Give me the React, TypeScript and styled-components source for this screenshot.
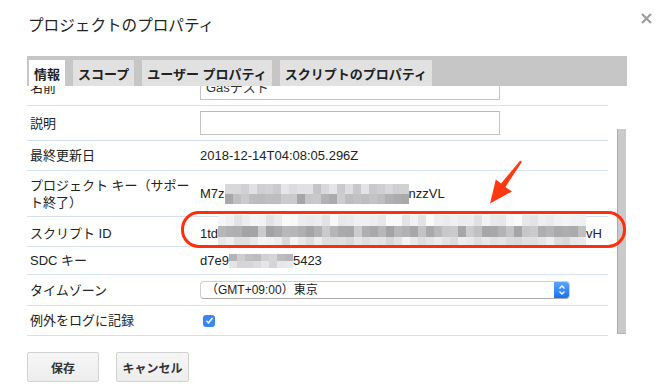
import React from 'react'
import styled, { createGlobalStyle } from 'styled-components'

const GlobalStyle = createGlobalStyle`
  html, body {
    margin: 0;
    padding: 0;
    background: #fff;
  }
  body {
    font-family: "Liberation Sans", "Noto Sans CJK JP", sans-serif;
    color: #222;
  }
`

const Dialog = styled.div`
  position: relative;
  width: 659px;
  height: 389px;
  box-sizing: border-box;
  padding: 14px 0 0 27px;
  overflow: hidden;
`
const Title = styled.h1`
  margin: 0 0 18px 1px;
  font-size: 15.6px;
  line-height: 24px;
  font-weight: 400;
  color: #222;
`
const Close = styled.div`
  position: absolute;
  top: 11px;
  right: 6px;
  width: 13px;
  height: 13px;
`
const TabBar = styled.div`
  display: flex;
  gap: 8px;
  width: 600px;
  height: 30px;
  box-sizing: border-box;
  padding: 4px 0 0 2px;
  background: #c6c6c6;
  position: relative;
  z-index: 1;
`
const Tab = styled.div<{ $active?: boolean }>`
  display: flex;
  align-items: center;
  padding: 0 5px;
  font-size: 13px;
  font-weight: 700;
  white-space: nowrap;
  color: #222;
  background: ${(p) => (p.$active ? '#fff' : '#e1e1e1')};
`
const Panel = styled.div`
  display: flex;
  width: 600px;
  height: 250px;
`
const Scroller = styled.div`
  width: 581px;
  height: 250px;
  overflow: hidden;
`
const Rows = styled.div`
  margin-top: -16px;
`
const Thumb = styled.div`
  width: 9px;
  height: 205px;
  margin: 43px 0 0 9px;
  box-sizing: border-box;
  background: #cacaca;
  border-left: 1px solid #ababab;
  border-bottom: 1px solid #b4b4b4;
`
const Row = styled.div<{ $h: number }>`
  display: grid;
  grid-template-columns: 173px 1fr;
  align-items: center;
  height: ${(p) => p.$h}px;
  box-sizing: border-box;
  border-bottom: 1px solid #d3e1f0;
`
const Label = styled.div`
  padding: 0 6px 0 3px;
  font-size: 13px;
  line-height: 17px;
  color: #222;
`
const Value = styled.div`
  display: flex;
  align-items: center;
  font-size: 13px;
  white-space: nowrap;
  color: #222;
`
const TextBox = styled.div`
  width: 300px;
  height: 24px;
  box-sizing: border-box;
  padding: 0 5px;
  border: 1px solid #c4c4c4;
  border-top-color: #b9b9b9;
  font-size: 13px;
  line-height: 22px;
  color: #333;
`
const Select = styled.div`
  display: flex;
  width: 370px;
  height: 18px;
  box-sizing: border-box;
  border: 1px solid #cfcfcf;
  border-bottom-color: #a9a9a9;
  border-radius: 4px;
  overflow: hidden;
`
const SelectText = styled.div`
  flex: 1;
  padding-left: 5px;
  font-size: 12px;
  line-height: 16px;
  color: #222;
`
const Stepper = styled.div`
  width: 15px;
  display: flex;
  align-items: center;
  justify-content: center;
  background: linear-gradient(#5aa6fc, #1b6ff1);
`
const Check = styled.div`
  width: 12px;
  height: 12px;
  margin-left: 3px;
  border-radius: 3px;
  background: #3a86f7;
  display: flex;
  align-items: center;
  justify-content: center;
`
const MosaicGrid = styled.div<{ $cols: number; $cw: number; $ch: number; $shift: number }>`
  display: grid;
  flex: none;
  grid-template-columns: repeat(${(p) => p.$cols}, ${(p) => p.$cw}px);
  grid-auto-rows: ${(p) => p.$ch}px;
  margin-top: ${(p) => p.$shift}px;
  margin-bottom: ${(p) => -p.$shift}px;
`
const Footer = styled.div`
  display: flex;
  gap: 17px;
  margin-top: 16px;
`
const Button = styled.div<{ $w: number }>`
  width: ${(p) => p.$w}px;
  height: 30px;
  box-sizing: border-box;
  display: flex;
  align-items: center;
  justify-content: center;
  border: 1px solid #d2d2d2;
  border-radius: 2px;
  background: linear-gradient(#f6f6f6, #ededed);
  font-size: 12px;
  font-weight: 700;
  color: #333;
`
const Ring = styled.div`
  position: absolute;
  left: 181px;
  top: 211px;
  width: 445px;
  height: 37px;
  box-sizing: border-box;
  border: 3px solid #ff2d0e;
  border-radius: 18px;
`
const Arrow = styled.svg`
  position: absolute;
  left: 486px;
  top: 156px;
`

function rand(n: number) {
  const x = Math.sin(n * 12.9898 + 78.233) * 43758.5453
  return x - Math.floor(x)
}

function Mosaic({
  cols,
  cw,
  ch,
  bands,
  seed,
  shift = 0,
}: {
  cols: number
  cw: number
  ch: number
  bands: [number, number][]
  seed: number
  shift?: number
}) {
  const cells: React.ReactNode[] = []
  bands.forEach(([lo, hi], r) => {
    for (let c = 0; c < cols; c++) {
      const v = Math.round(lo + (hi - lo) * rand(seed + r * 97 + c))
      cells.push(<span key={r + '-' + c} style={{ background: `rgb(${v},${v},${v + 2})` }} />)
    }
  })
  return (
    <MosaicGrid $cols={cols} $cw={cw} $ch={ch} $shift={shift}>
      {cells}
    </MosaicGrid>
  )
}

export default function App() {
  return (
    <>
      <GlobalStyle />
      <Dialog>
        <Title>プロジェクトのプロパティ</Title>
        <Close>
          <svg width="13" height="13" viewBox="0 0 13 13">
            <path d="M2 2 L11 11 M11 2 L2 11" stroke="#9d9d9d" strokeWidth="2.2" />
          </svg>
        </Close>
        <TabBar>
          <Tab $active>情報</Tab>
          <Tab>スコープ</Tab>
          <Tab>ユーザー プロパティ</Tab>
          <Tab>スクリプトのプロパティ</Tab>
        </TabBar>
        <Panel>
          <Scroller>
            <Rows>
              <Row $h={36}>
                <Label>名前</Label>
                <Value>
                  <TextBox>Gasテスト</TextBox>
                </Value>
              </Row>
              <Row $h={35}>
                <Label>説明</Label>
                <Value>
                  <TextBox />
                </Value>
              </Row>
              <Row $h={30}>
                <Label>最終更新日</Label>
                <Value>2018-12-14T04:08:05.296Z</Value>
              </Row>
              <Row $h={46}>
                <Label>プロジェクト キー（サポート終了）</Label>
                <Value>
                  M7z
                  <Mosaic cols={23} cw={8} ch={10} seed={11} bands={[[195, 230], [165, 205]]} />
                  nzzVL
                </Value>
              </Row>
              <Row $h={30}>
                <Label>スクリプト ID</Label>
                <Value>
                  1td
                  <Mosaic
                    cols={46}
                    cw={8}
                    ch={11}
                    seed={41}
                    shift={-2}
                    bands={[[225, 250], [160, 205], [215, 245]]}
                  />
                  vH
                </Value>
              </Row>
              <Row $h={28}>
                <Label>SDC キー</Label>
                <Value>
                  d7e9
                  <Mosaic cols={8} cw={8} ch={7} seed={73} bands={[[180, 215], [210, 235]]} />
                  5423
                </Value>
              </Row>
              <Row $h={31}>
                <Label>タイムゾーン</Label>
                <Value>
                  <Select>
                    <SelectText>（GMT+09:00）東京</SelectText>
                    <Stepper>
                      <svg width="8" height="12" viewBox="0 0 8 12">
                        <path
                          d="M1.5 4.5 L4 2 L6.5 4.5 M1.5 7.5 L4 10 L6.5 7.5"
                          stroke="#fff"
                          strokeWidth="1.3"
                          fill="none"
                        />
                      </svg>
                    </Stepper>
                  </Select>
                </Value>
              </Row>
              <Row $h={30}>
                <Label>例外をログに記録</Label>
                <Value>
                  <Check>
                    <svg width="9" height="9" viewBox="0 0 9 9">
                      <path d="M1.5 4.8 L3.6 6.8 L7.5 2" stroke="#fff" strokeWidth="1.6" fill="none" />
                    </svg>
                  </Check>
                </Value>
              </Row>
            </Rows>
          </Scroller>
          <Thumb />
        </Panel>
        <Footer>
          <Button $w={72}>保存</Button>
          <Button $w={73}>キャンセル</Button>
        </Footer>
        <Ring />
        <Arrow width="40" height="50" viewBox="486 156 40 50">
          <polygon
            points="520.2,160.4 522,161.8 505.4,187 512,191.5 490,203.5 495.8,179.5 501,183.6"
            fill="#ff3a12"
          />
        </Arrow>
      </Dialog>
    </>
  )
}
